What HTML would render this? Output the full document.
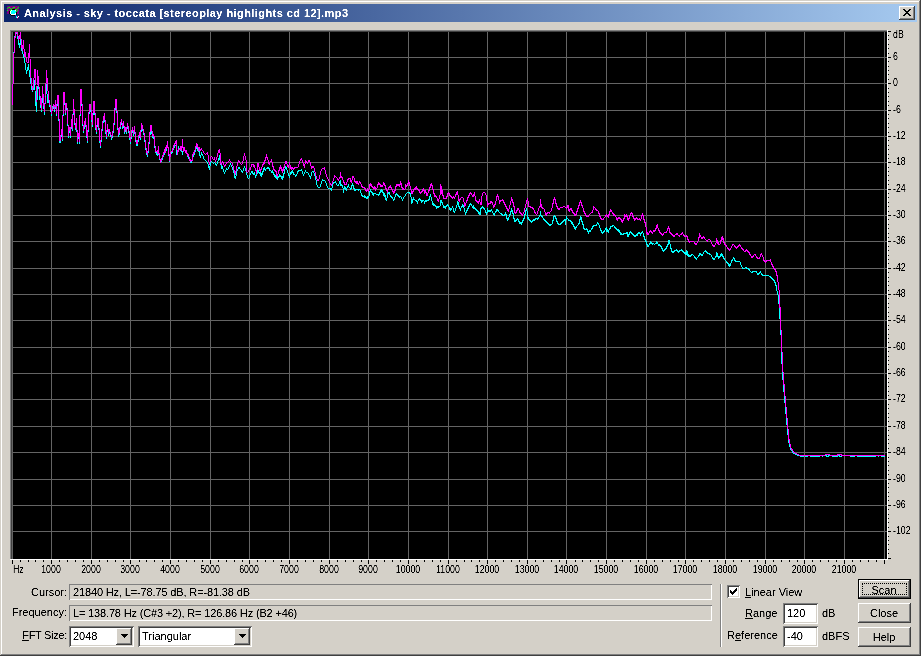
<!DOCTYPE html>
<html><head><meta charset="utf-8"><style>
html,body{margin:0;padding:0;}
body{width:921px;height:656px;overflow:hidden;background:#d4d0c8;position:relative;font-family:"Liberation Sans",sans-serif;}
div{position:absolute;}
.t{position:absolute;white-space:pre;line-height:13px;filter:url(#cx);font-family:"Liberation Sans",sans-serif;}
u{text-decoration:underline;}
</style></head><body>
<svg width="0" height="0" style="position:absolute"><filter id="cx"><feComponentTransfer><feFuncA type="linear" slope="2.2" intercept="-0.5"/></feComponentTransfer></filter></svg>
<div style="left:1px;top:1px;width:918px;height:1px;background:#fff;"></div>
<div style="left:1px;top:1px;width:1px;height:653px;background:#fff;"></div>
<div style="left:919px;top:1px;width:1px;height:654px;background:#808080;"></div>
<div style="left:1px;top:654px;width:919px;height:1px;background:#808080;"></div>
<div style="left:920px;top:0px;width:1px;height:656px;background:#404040;"></div>
<div style="left:0px;top:655px;width:921px;height:1px;background:#404040;"></div>
<div style="left:4px;top:4px;width:913px;height:18px;background:linear-gradient(to right,#0a246a,#a6caf0);"></div>
<span class="t" style="left:24px;top:7px;font-size:11px;font-weight:bold;color:#fff;letter-spacing:0.43px;">Analysis - sky - toccata [stereoplay highlights cd 12].mp3</span>
<svg style="position:absolute;left:4px;top:4px" width="18" height="18" shape-rendering="crispEdges"><rect x="3" y="2" width="12" height="8" fill="#800080"/><rect x="4" y="3" width="1" height="1" fill="#00ff00"/><rect x="5" y="3" width="1" height="1" fill="#00ff00"/><rect x="9" y="3" width="1" height="1" fill="#00ff00"/><rect x="10" y="3" width="1" height="1" fill="#00ff00"/><rect x="14" y="3" width="1" height="1" fill="#00ff00"/><rect x="3" y="4" width="1" height="1" fill="#00ff00"/><rect x="6" y="4" width="1" height="1" fill="#00ff00"/><rect x="8" y="4" width="1" height="1" fill="#00ff00"/><rect x="13" y="4" width="1" height="1" fill="#00ff00"/><rect x="7" y="5" width="1" height="1" fill="#00ff00"/><rect x="11" y="5" width="1" height="1" fill="#00ff00"/><rect x="12" y="5" width="1" height="1" fill="#00ff00"/><rect x="3" y="6" width="1" height="1" fill="#00ff00"/><rect x="6" y="6" width="1" height="1" fill="#00ff00"/><rect x="13" y="6" width="1" height="1" fill="#00ff00"/><rect x="12" y="7" width="1" height="1" fill="#00ff00"/><rect x="8" y="5" width="1" height="1" fill="#000000"/><rect x="9" y="5" width="1" height="1" fill="#000000"/><rect x="10" y="5" width="1" height="1" fill="#000000"/><rect x="5" y="7" width="1" height="1" fill="#000000"/><rect x="5" y="8" width="1" height="1" fill="#000000"/><rect x="5" y="9" width="1" height="1" fill="#000000"/><rect x="6" y="10" width="1" height="1" fill="#000000"/><rect x="7" y="11" width="1" height="1" fill="#000000"/><rect x="8" y="11" width="1" height="1" fill="#000000"/><rect x="9" y="11" width="1" height="1" fill="#000000"/><rect x="10" y="11" width="1" height="1" fill="#000000"/><rect x="12" y="8" width="1" height="1" fill="#000000"/><rect x="12" y="9" width="1" height="1" fill="#000000"/><rect x="12" y="10" width="1" height="1" fill="#000000"/><rect x="6" y="7" width="1" height="1" fill="#ffffff"/><rect x="6" y="8" width="1" height="1" fill="#ffffff"/><rect x="6" y="9" width="1" height="1" fill="#ffffff"/><rect x="7" y="10" width="1" height="1" fill="#ffffff"/><rect x="7" y="6" width="1" height="1" fill="#ffffff"/><rect x="11" y="6" width="1" height="1" fill="#ffffff"/><rect x="11" y="9" width="1" height="1" fill="#ffffff"/><rect x="11" y="10" width="1" height="1" fill="#ffffff"/><rect x="8" y="10" width="1" height="1" fill="#ffffff"/><rect x="9" y="10" width="1" height="1" fill="#ffffff"/><rect x="10" y="10" width="1" height="1" fill="#ffffff"/><rect x="13" y="13" width="1" height="1" fill="#ffffff"/><rect x="14" y="12" width="1" height="1" fill="#ffffff"/><rect x="8" y="6" width="1" height="1" fill="#00ffff"/><rect x="9" y="6" width="1" height="1" fill="#00ffff"/><rect x="10" y="6" width="1" height="1" fill="#00ffff"/><rect x="7" y="7" width="1" height="1" fill="#00ffff"/><rect x="8" y="7" width="1" height="1" fill="#00ffff"/><rect x="9" y="7" width="1" height="1" fill="#00ffff"/><rect x="10" y="7" width="1" height="1" fill="#00ffff"/><rect x="11" y="7" width="1" height="1" fill="#00ffff"/><rect x="7" y="8" width="1" height="1" fill="#00ffff"/><rect x="8" y="8" width="1" height="1" fill="#00ffff"/><rect x="9" y="8" width="1" height="1" fill="#00ffff"/><rect x="10" y="8" width="1" height="1" fill="#00ffff"/><rect x="11" y="8" width="1" height="1" fill="#00ffff"/><rect x="7" y="9" width="1" height="1" fill="#00ffff"/><rect x="8" y="9" width="1" height="1" fill="#00ffff"/><rect x="9" y="9" width="1" height="1" fill="#00ffff"/><rect x="10" y="9" width="1" height="1" fill="#00ffff"/><rect x="12" y="12" width="1" height="1" fill="#00ffff"/><rect x="12" y="13" width="1" height="1" fill="#00ffff"/><rect x="11" y="11" width="1" height="1" fill="#0000ff"/><rect x="13" y="12" width="1" height="1" fill="#800080"/><rect x="14" y="13" width="1" height="1" fill="#800080"/><rect x="13" y="14" width="1" height="1" fill="#800080"/></svg>
<div style="left:899px;top:6px;width:16px;height:14px;background:#d4d0c8;box-shadow:inset -1px -1px #404040,inset 1px 1px #fff,inset -2px -2px #808080;"></div>
<svg style="position:absolute;left:899px;top:6px" width="16" height="14" shape-rendering="crispEdges"><path d="M4 3h2v1h1v1h2v-1h1v-1h2v1h-1v1h-1v1h-1v1h1v1h1v1h1v1h-2v-1h-1v-1h-2v1h-1v1h-2v-1h1v-1h1v-1h1v-1h-1v-1h-1v-1h-1z" fill="#000"/></svg>
<div style="left:10px;top:30px;width:877px;height:1px;background:#808080;"></div>
<div style="left:10px;top:30px;width:1px;height:529px;background:#808080;"></div>
<div style="left:11px;top:31px;width:876px;height:1px;background:#404040;"></div>
<div style="left:11px;top:31px;width:1px;height:528px;background:#404040;"></div>
<div style="left:10px;top:559px;width:878px;height:1px;background:#fff;"></div>
<div style="left:887px;top:30px;width:1px;height:530px;background:#fff;"></div>
<svg style="position:absolute;left:12px;top:32px" width="875" height="527"><rect width="875" height="527" fill="#000"/><path d="M0.5 0V527M39.5 0V527M79.5 0V527M118.5 0V527M158.5 0V527M198.5 0V527M237.5 0V527M277.5 0V527M317.5 0V527M356.5 0V527M396.5 0V527M436.5 0V527M475.5 0V527M515.5 0V527M554.5 0V527M594.5 0V527M634.5 0V527M673.5 0V527M713.5 0V527M753.5 0V527M792.5 0V527M832.5 0V527M872.5 0V527M0 25.5H875M0 51.5H875M0 78.5H875M0 104.5H875M0 130.5H875M0 157.5H875M0 183.5H875M0 209.5H875M0 236.5H875M0 262.5H875M0 288.5H875M0 315.5H875M0 341.5H875M0 367.5H875M0 394.5H875M0 420.5H875M0 447.5H875M0 473.5H875M0 499.5H875" stroke="#646464" stroke-width="1" shape-rendering="crispEdges"/><polyline points="0.5,73.5 1.5,31.5 2.5,8.5 3.5,0.5 4.5,0.5 5.5,3.5 6.5,10.5 7.5,15.5 8.5,7.5 9.5,18.0 10.5,20.5 11.5,23.0 12.5,28.5 13.5,33.5 14.5,41.5 15.5,37.0 16.5,32.5 17.5,42.5 18.5,47.5 19.5,55.5 20.5,59.5 21.5,55.5 22.5,48.5 23.5,68.0 24.5,79.5 25.5,57.5 26.5,51.5 27.5,63.0 28.5,72.5 29.5,79.5 30.5,63.5 31.5,71.5 32.5,82.5 33.5,60.5 34.5,52.5 35.5,70.5 36.5,68.0 37.5,73.5 38.5,77.0 39.5,83.5 40.5,74.5 41.5,74.5 42.5,79.5 43.5,70.5 44.5,83.5 45.5,65.5 46.5,65.5 47.5,110.5 48.5,110.5 49.5,99.5 50.5,108.5 51.5,62.5 52.5,62.5 53.5,83.0 54.5,73.5 55.5,83.0 56.5,105.5 57.5,97.0 58.5,105.5 59.5,89.5 60.5,98.5 61.5,69.5 62.5,88.0 63.5,97.5 64.5,88.5 65.5,111.5 66.5,103.0 67.5,111.5 68.5,59.5 69.5,59.5 70.5,88.0 71.5,100.5 72.5,93.5 73.5,88.5 74.5,100.5 75.5,110.5 76.5,90.0 77.5,74.5 78.5,74.5 79.5,84.5 80.5,94.5 81.5,71.5 82.5,71.5 83.5,93.5 84.5,101.5 85.5,88.5 86.5,88.5 87.5,107.0 88.5,115.5 89.5,105.5 90.5,93.5 91.5,88.5 92.5,83.5 93.5,96.5 94.5,106.5 95.5,94.5 96.5,102.5 97.5,100.5 98.5,103.0 99.5,107.5 100.5,103.5 101.5,98.5 102.5,87.0 103.5,69.5 104.5,69.5 105.5,91.5 106.5,104.5 107.5,100.5 108.5,94.5 109.5,89.5 110.5,96.5 111.5,91.5 112.5,100.5 113.5,98.5 114.5,100.5 115.5,93.5 116.5,98.0 117.5,103.5 118.5,111.5 119.5,103.5 120.5,97.5 121.5,103.5 122.5,96.5 123.5,107.0 124.5,113.5 125.5,113.5 126.5,107.0 127.5,103.5 128.5,107.5 129.5,93.5 130.5,96.5 131.5,101.0 132.5,105.0 133.5,114.5 134.5,120.5 135.5,124.5 136.5,117.0 137.5,108.0 138.5,98.5 139.5,96.5" fill="none" stroke="#00ffff" stroke-width="1" shape-rendering="crispEdges"/><path d="M139 96h1v6h-1zM140 102h1v4h-1zM141 104h1v3h-1zM142 106h1v10h-1zM143 116h1v5h-1zM144 120h1v3h-1zM145 121h1v3h-1zM146 118h1v5h-1zM147 123h1v5h-1zM148 128h1v1h-1zM149 128h1v2h-1zM150 125h1v3h-1zM151 123h1v2h-1zM152 120h1v3h-1zM153 118h1v3h-1zM154 116h1v3h-1zM155 114h1v2h-1zM156 116h1v8h-1zM157 124h1v6h-1zM158 122h1v2h-1zM159 119h1v3h-1zM160 118h1v3h-1zM161 116h1v2h-1zM162 114h1v2h-1zM163 113h1v1h-1zM164 113h1v10h-1zM165 118h1v5h-1zM166 114h1v4h-1zM167 116h1v1h-1zM168 116h1v3h-1zM169 117h1v3h-1zM170 119h1v4h-1zM171 116h1v4h-1zM172 116h1v3h-1zM173 118h1v3h-1zM174 119h1v3h-1zM175 122h1v3h-1zM176 124h1v3h-1zM177 127h1v2h-1zM178 128h1v3h-1zM179 128h1v3h-1zM180 125h1v3h-1zM181 123h1v2h-1zM182 120h1v3h-1zM183 117h1v3h-1zM184 114h1v3h-1zM185 115h1v4h-1zM186 119h1v1h-1zM187 118h1v6h-1zM188 123h1v3h-1zM189 120h1v3h-1zM190 122h1v2h-1zM191 124h1v3h-1zM192 127h1v1h-1zM193 128h1v1h-1zM194 129h1v1h-1zM195 130h1v2h-1zM196 132h1v4h-1zM197 134h1v4h-1zM198 130h1v4h-1zM199 129h1v1h-1zM200 130h1v1h-1zM201 131h1v1h-1zM202 130h1v1h-1zM203 131h1v2h-1zM204 132h1v2h-1zM205 129h1v3h-1zM206 126h1v3h-1zM207 123h1v5h-1zM208 128h1v5h-1zM209 133h1v4h-1zM210 134h1v3h-1zM211 137h1v3h-1zM212 140h1v2h-1zM213 138h1v2h-1zM214 136h1v2h-1zM215 137h1v1h-1zM216 135h1v2h-1zM217 133h1v2h-1zM218 131h1v2h-1zM219 133h1v2h-1zM220 135h1v3h-1zM221 138h1v3h-1zM222 141h1v5h-1zM223 144h1v3h-1zM224 139h1v5h-1zM225 137h1v2h-1zM226 135h1v2h-1zM227 135h1v2h-1zM228 137h1v1h-1zM229 138h1v2h-1zM230 139h1v2h-1zM231 136h1v3h-1zM232 134h1v2h-1zM233 136h1v3h-1zM234 139h1v4h-1zM235 143h1v3h-1zM236 146h1v1h-1zM237 143h1v3h-1zM238 141h1v2h-1zM239 139h1v2h-1zM240 139h1v3h-1zM241 141h1v2h-1zM242 140h1v3h-1zM243 143h1v3h-1zM244 142h1v2h-1zM245 138h1v4h-1zM246 138h1v3h-1zM247 140h1v2h-1zM248 140h1v4h-1zM249 141h1v4h-1zM250 139h1v4h-1zM251 136h1v4h-1zM252 135h1v3h-1zM253 137h1v2h-1zM254 136h1v1h-1zM255 135h1v2h-1zM256 135h1v2h-1zM257 136h1v3h-1zM258 138h1v1h-1zM259 139h1v2h-1zM260 138h1v3h-1zM261 140h1v3h-1zM262 142h1v3h-1zM263 143h1v3h-1zM264 144h1v3h-1zM265 145h1v3h-1zM266 144h1v2h-1zM267 142h1v3h-1zM268 143h1v2h-1zM269 144h1v3h-1zM270 144h1v4h-1zM271 141h1v5h-1zM272 137h1v5h-1zM273 134h1v3h-1zM274 135h1v3h-1zM275 138h1v3h-1zM276 141h1v3h-1zM277 143h1v3h-1zM278 140h1v3h-1zM279 139h1v3h-1zM280 138h1v3h-1zM281 140h1v3h-1zM282 142h1v1h-1zM283 143h1v2h-1zM284 142h1v2h-1zM285 139h1v3h-1zM286 138h1v2h-1zM287 138h1v1h-1zM288 138h1v1h-1zM289 137h1v2h-1zM290 139h1v3h-1zM291 142h1v2h-1zM292 140h1v2h-1zM293 138h1v2h-1zM294 140h1v1h-1zM295 140h1v1h-1zM296 141h1v2h-1zM297 143h1v2h-1zM298 144h1v3h-1zM299 140h1v4h-1zM300 139h1v1h-1zM301 139h1v2h-1zM302 141h1v3h-1zM303 144h1v4h-1zM304 148h1v5h-1zM305 153h1v2h-1zM306 155h1v1h-1zM307 155h1v1h-1zM308 152h1v3h-1zM309 149h1v3h-1zM310 147h1v2h-1zM311 148h1v1h-1zM312 148h1v1h-1zM313 149h1v2h-1zM314 151h1v3h-1zM315 154h1v2h-1zM316 156h1v1h-1zM317 156h1v1h-1zM318 156h1v2h-1zM319 156h1v3h-1zM320 152h1v4h-1zM321 150h1v2h-1zM322 150h1v1h-1zM323 149h1v2h-1zM324 151h1v2h-1zM325 153h1v1h-1zM326 152h1v2h-1zM327 149h1v3h-1zM328 148h1v6h-1zM329 152h1v2h-1zM330 153h1v3h-1zM331 156h1v5h-1zM332 154h1v3h-1zM333 155h1v3h-1zM334 156h1v3h-1zM335 154h1v2h-1zM336 152h1v3h-1zM337 155h1v1h-1zM338 156h1v2h-1zM339 153h1v4h-1zM340 151h1v3h-1zM341 153h1v4h-1zM342 156h1v3h-1zM343 157h1v2h-1zM344 157h1v1h-1zM345 157h1v1h-1zM346 157h1v2h-1zM347 157h1v1h-1zM348 158h1v3h-1zM349 161h1v3h-1zM350 163h1v2h-1zM351 164h1v1h-1zM352 163h1v3h-1zM353 164h1v2h-1zM354 165h1v2h-1zM355 164h1v3h-1zM356 164h1v2h-1zM357 159h1v5h-1zM358 157h1v3h-1zM359 159h1v2h-1zM360 160h1v3h-1zM361 161h1v3h-1zM362 161h1v1h-1zM363 161h1v1h-1zM364 162h1v1h-1zM365 162h1v1h-1zM366 162h1v2h-1zM367 160h1v3h-1zM368 158h1v3h-1zM369 157h1v3h-1zM370 158h1v3h-1zM371 160h1v4h-1zM372 161h1v4h-1zM373 163h1v5h-1zM374 166h1v3h-1zM375 160h1v6h-1zM376 160h1v2h-1zM377 160h1v3h-1zM378 163h1v2h-1zM379 164h1v2h-1zM380 165h1v2h-1zM381 167h1v2h-1zM382 165h1v3h-1zM383 162h1v3h-1zM384 161h1v2h-1zM385 162h1v2h-1zM386 163h1v2h-1zM387 164h1v2h-1zM388 164h1v1h-1zM389 165h1v2h-1zM390 167h1v2h-1zM391 165h1v2h-1zM392 164h1v1h-1zM393 162h1v2h-1zM394 161h1v1h-1zM395 160h1v1h-1zM396 160h1v1h-1zM397 160h1v2h-1zM398 161h1v4h-1zM399 165h1v7h-1zM400 167h1v4h-1zM401 165h1v3h-1zM402 167h1v1h-1zM403 168h1v1h-1zM404 168h1v2h-1zM405 169h1v3h-1zM406 167h1v2h-1zM407 166h1v2h-1zM408 167h1v2h-1zM409 168h1v3h-1zM410 168h1v2h-1zM411 168h1v1h-1zM412 169h1v3h-1zM413 168h1v2h-1zM414 168h1v2h-1zM415 168h1v1h-1zM416 167h1v2h-1zM417 164h1v4h-1zM418 162h1v3h-1zM419 165h1v4h-1zM420 169h1v4h-1zM421 171h1v3h-1zM422 172h1v2h-1zM423 173h1v2h-1zM424 174h1v3h-1zM425 174h1v2h-1zM426 174h1v2h-1zM427 174h1v1h-1zM428 168h1v6h-1zM429 168h1v3h-1zM430 170h1v3h-1zM431 173h1v3h-1zM432 174h1v2h-1zM433 174h1v3h-1zM434 173h1v2h-1zM435 172h1v2h-1zM436 173h1v2h-1zM437 175h1v3h-1zM438 176h1v3h-1zM439 176h1v2h-1zM440 174h1v2h-1zM441 176h1v4h-1zM442 179h1v2h-1zM443 176h1v3h-1zM444 173h1v3h-1zM445 169h1v4h-1zM446 170h1v5h-1zM447 174h1v3h-1zM448 176h1v3h-1zM449 174h1v2h-1zM450 172h1v3h-1zM451 173h1v3h-1zM452 176h1v4h-1zM453 180h1v3h-1zM454 178h1v3h-1zM455 176h1v3h-1zM456 174h1v3h-1zM457 172h1v3h-1zM458 171h1v2h-1zM459 172h1v2h-1zM460 174h1v2h-1zM461 173h1v4h-1zM462 175h1v2h-1zM463 176h1v2h-1zM464 177h1v2h-1zM465 178h1v2h-1zM466 179h1v3h-1zM467 180h1v3h-1zM468 176h1v7h-1zM469 175h1v2h-1zM470 174h1v2h-1zM471 175h1v2h-1zM472 176h1v2h-1zM473 178h1v3h-1zM474 180h1v3h-1zM475 176h1v5h-1zM476 178h1v2h-1zM477 178h1v2h-1zM478 178h1v2h-1zM479 177h1v2h-1zM480 179h1v2h-1zM481 181h1v2h-1zM482 181h1v3h-1zM483 179h1v2h-1zM484 177h1v3h-1zM485 177h1v2h-1zM486 178h1v2h-1zM487 180h1v1h-1zM488 181h1v1h-1zM489 181h1v2h-1zM490 182h1v2h-1zM491 183h1v1h-1zM492 182h1v2h-1zM493 180h1v3h-1zM494 182h1v5h-1zM495 186h1v3h-1zM496 185h1v3h-1zM497 182h1v3h-1zM498 179h1v4h-1zM499 176h1v4h-1zM500 178h1v4h-1zM501 181h1v6h-1zM502 186h1v4h-1zM503 188h1v2h-1zM504 187h1v2h-1zM505 186h1v2h-1zM506 187h1v3h-1zM507 189h1v3h-1zM508 190h1v2h-1zM509 190h1v3h-1zM510 188h1v3h-1zM511 186h1v3h-1zM512 182h1v5h-1zM513 178h1v5h-1zM514 176h1v3h-1zM515 179h1v8h-1zM516 185h1v3h-1zM517 187h1v2h-1zM518 188h1v2h-1zM519 189h1v2h-1zM520 188h1v2h-1zM521 187h1v2h-1zM522 187h1v2h-1zM523 186h1v2h-1zM524 186h1v1h-1zM525 186h1v2h-1zM526 185h1v2h-1zM527 183h1v2h-1zM528 179h1v5h-1zM529 183h1v2h-1zM530 184h1v2h-1zM531 186h1v2h-1zM532 187h1v2h-1zM533 188h1v2h-1zM534 189h1v2h-1zM535 190h1v2h-1zM536 191h1v2h-1zM537 192h1v2h-1zM538 192h1v2h-1zM539 192h1v1h-1zM540 188h1v4h-1zM541 184h1v5h-1zM542 183h1v2h-1zM543 184h1v3h-1zM544 186h1v4h-1zM545 189h1v3h-1zM546 191h1v2h-1zM547 192h1v1h-1zM548 191h1v2h-1zM549 190h1v2h-1zM550 189h1v2h-1zM551 188h1v2h-1zM552 187h1v2h-1zM553 187h1v6h-1zM554 184h1v4h-1zM555 186h1v1h-1zM556 187h1v2h-1zM557 188h1v1h-1zM558 188h1v2h-1zM559 189h1v3h-1zM560 190h1v3h-1zM561 192h1v3h-1zM562 194h1v3h-1zM563 195h1v3h-1zM564 194h1v2h-1zM565 193h1v1h-1zM566 191h1v2h-1zM567 187h1v5h-1zM568 184h1v4h-1zM569 185h1v5h-1zM570 189h1v4h-1zM571 192h1v5h-1zM572 196h1v2h-1zM573 197h1v1h-1zM574 196h1v2h-1zM575 197h1v3h-1zM576 199h1v3h-1zM577 198h1v2h-1zM578 198h1v2h-1zM579 196h1v2h-1zM580 194h1v3h-1zM581 193h1v2h-1zM582 193h1v1h-1zM583 193h1v1h-1zM584 192h1v2h-1zM585 190h1v2h-1zM586 191h1v2h-1zM587 193h1v3h-1zM588 196h1v3h-1zM589 198h1v3h-1zM590 200h1v2h-1zM591 199h1v2h-1zM592 198h1v2h-1zM593 196h1v2h-1zM594 195h1v5h-1zM595 197h1v3h-1zM596 198h1v3h-1zM597 196h1v2h-1zM598 194h1v3h-1zM599 194h1v1h-1zM600 193h1v2h-1zM601 193h1v1h-1zM602 194h1v2h-1zM603 195h1v2h-1zM604 196h1v2h-1zM605 197h1v2h-1zM606 197h1v3h-1zM607 198h1v3h-1zM608 200h1v3h-1zM609 201h1v2h-1zM610 202h1v1h-1zM611 201h1v2h-1zM612 201h1v1h-1zM613 201h1v1h-1zM614 200h1v2h-1zM615 200h1v5h-1zM616 202h1v3h-1zM617 200h1v3h-1zM618 199h1v2h-1zM619 200h1v2h-1zM620 201h1v2h-1zM621 202h1v2h-1zM622 203h1v2h-1zM623 203h1v2h-1zM624 202h1v2h-1zM625 201h1v3h-1zM626 200h1v2h-1zM627 200h1v2h-1zM628 201h1v3h-1zM629 200h1v2h-1zM630 199h1v2h-1zM631 201h1v4h-1zM632 204h1v4h-1zM633 207h1v3h-1zM634 209h1v4h-1zM635 212h1v3h-1zM636 213h1v2h-1zM637 211h1v2h-1zM638 209h1v3h-1zM639 210h1v2h-1zM640 211h1v2h-1zM641 211h1v1h-1zM642 212h1v1h-1zM643 211h1v1h-1zM644 209h1v3h-1zM645 210h1v2h-1zM646 212h1v2h-1zM647 212h1v2h-1zM648 213h1v2h-1zM649 214h1v3h-1zM650 216h1v3h-1zM651 218h1v2h-1zM652 217h1v2h-1zM653 216h1v2h-1zM654 214h1v3h-1zM655 212h1v3h-1zM656 208h1v5h-1zM657 208h1v4h-1zM658 212h1v5h-1zM659 216h1v4h-1zM660 219h1v2h-1zM661 219h1v2h-1zM662 218h1v2h-1zM663 218h1v1h-1zM664 217h1v2h-1zM665 218h1v2h-1zM666 219h1v2h-1zM667 218h1v2h-1zM668 218h1v1h-1zM669 217h1v2h-1zM670 218h1v2h-1zM671 219h1v2h-1zM672 220h1v2h-1zM673 220h1v3h-1zM674 218h1v5h-1zM675 219h1v5h-1zM676 222h1v3h-1zM677 223h1v2h-1zM678 223h1v2h-1zM679 222h1v2h-1zM680 222h1v1h-1zM681 223h1v1h-1zM682 224h1v2h-1zM683 225h1v2h-1zM684 226h1v2h-1zM685 225h1v1h-1zM686 223h1v2h-1zM687 221h1v3h-1zM688 221h1v2h-1zM689 222h1v2h-1zM690 222h1v2h-1zM691 220h1v2h-1zM692 219h1v1h-1zM693 218h1v2h-1zM694 219h1v2h-1zM695 220h1v2h-1zM696 221h1v1h-1zM697 221h1v2h-1zM698 222h1v1h-1zM699 223h1v2h-1zM700 225h1v2h-1zM701 226h1v2h-1zM702 226h1v2h-1zM703 224h1v2h-1zM704 220h1v5h-1zM705 221h1v4h-1zM706 224h1v3h-1zM707 224h1v2h-1zM708 222h1v3h-1zM709 221h1v3h-1zM710 222h1v3h-1zM711 224h1v3h-1zM712 226h1v2h-1zM713 228h1v1h-1zM714 229h1v2h-1zM715 230h1v2h-1zM716 231h1v3h-1zM717 232h1v3h-1zM718 231h1v3h-1zM719 228h1v3h-1zM720 227h1v2h-1zM721 225h1v2h-1zM722 226h1v3h-1zM723 228h1v2h-1zM724 229h1v1h-1zM725 229h1v1h-1zM726 229h1v1h-1zM727 229h1v1h-1zM728 230h1v3h-1zM729 233h1v2h-1zM730 235h1v2h-1zM731 236h1v1h-1zM732 236h1v1h-1zM733 235h1v1h-1zM734 235h1v2h-1zM735 236h1v1h-1zM736 236h1v2h-1zM737 237h1v2h-1zM738 239h1v1h-1zM739 240h1v1h-1zM740 239h1v2h-1zM741 239h1v1h-1zM742 239h1v1h-1zM743 239h1v1h-1zM744 239h1v2h-1zM745 241h1v2h-1zM746 241h1v2h-1zM747 240h1v2h-1zM748 239h1v2h-1zM749 241h1v2h-1zM750 242h1v2h-1zM751 243h1v1h-1zM752 243h1v1h-1zM753 243h1v1h-1zM754 243h1v1h-1zM755 243h1v1h-1zM756 243h1v1h-1zM757 244h1v1h-1zM758 244h1v2h-1zM759 245h1v2h-1zM760 246h1v2h-1zM761 247h1v2h-1zM762 248h1v3h-1zM763 250h1v4h-1zM764 253h1v5h-1z" fill="#00ffff" shape-rendering="crispEdges"/><polyline points="764.5,257.5 765.8,261.5 766.8,268.5 767.7,284.5 768.8,292.5 769.3,317.5 770.5,342.0 772.7,367.5 775.0,392.5 776.5,408.5 778.5,416.5 781.0,421.0 786.0,423.7 790.5,424.5 792.5,423.5 794.5,424.5 796.5,423.5 798.5,424.0 800.5,424.0 802.5,424.0 804.5,424.0 806.5,424.5 808.5,423.5 810.5,424.0 812.5,423.5 814.5,424.0 816.5,424.0 818.5,423.5 820.5,424.0 822.5,424.5 824.5,424.5 826.5,423.5 828.5,424.5 830.5,423.5 832.5,423.5 834.5,423.5 836.5,423.5 838.5,424.0 840.5,424.5 842.5,424.0 844.5,423.5 846.5,424.5 848.5,424.0 850.5,424.0 852.5,424.5 854.5,424.5 856.5,424.5 858.5,424.5 860.5,424.0 862.5,424.5 864.5,423.5 866.5,424.0 868.5,423.5 870.5,424.5 872.5,424.5" fill="none" stroke="#00ffff" stroke-width="1" shape-rendering="crispEdges"/><polyline points="0.5,73.5 1.5,31.5 2.5,11.0 3.5,0.5 4.5,0.5 5.5,0.5 6.5,7.5 7.5,6.0 8.5,0.5 9.5,13.0 10.5,18.5 11.5,8.5 12.5,25.0 13.5,20.5 14.5,29.0 15.5,30.5 16.5,30.5 17.5,12.5 18.5,40.0 19.5,51.0 20.5,57.5 21.5,55.0 22.5,37.5 23.5,37.5 24.5,69.5 25.5,38.5 26.5,49.5 27.5,59.5 28.5,68.0 29.5,77.5 30.5,54.5 31.5,69.0 32.5,79.5 33.5,64.5 34.5,38.5 35.5,53.5 36.5,64.5 37.5,71.5 38.5,74.0 39.5,81.5 40.5,77.0 41.5,72.5 42.5,77.5 43.5,68.5 44.5,81.5 45.5,63.5 46.5,63.5 47.5,108.5 48.5,108.5 49.5,97.5 50.5,106.5 51.5,60.5 52.5,60.5 53.5,81.0 54.5,71.5 55.5,81.0 56.5,103.5 57.5,95.0 58.5,103.5 59.5,87.5 60.5,96.5 61.5,67.5 62.5,86.0 63.5,95.5 64.5,86.5 65.5,109.5 66.5,101.0 67.5,109.5 68.5,57.5 69.5,57.5 70.5,86.0 71.5,98.5 72.5,91.5 73.5,86.5 74.5,98.5 75.5,108.5 76.5,88.0 77.5,72.5 78.5,72.5 79.5,82.5 80.5,92.5 81.5,69.5 82.5,69.5 83.5,91.5 84.5,99.5 85.5,86.5 86.5,86.5 87.5,105.0 88.5,113.5 89.5,103.5 90.5,91.5 91.5,86.5 92.5,81.5 93.5,94.5 94.5,104.5 95.5,92.5 96.5,100.5 97.5,98.5 98.5,101.0 99.5,105.5 100.5,101.5 101.5,96.5 102.5,85.0 103.5,67.5 104.5,67.5 105.5,89.5 106.5,102.5 107.5,98.5 108.5,92.5 109.5,87.5 110.5,94.5 111.5,89.5 112.5,98.5 113.5,96.5 114.5,98.5 115.5,91.5 116.5,96.0 117.5,101.5 118.5,109.5 119.5,101.5 120.5,95.5 121.5,101.5 122.5,94.5 123.5,105.0 124.5,111.5 125.5,111.5 126.5,105.0 127.5,101.5 128.5,105.5 129.5,91.5 130.5,94.5 131.5,99.0 132.5,103.0 133.5,112.5 134.5,118.5 135.5,122.5 136.5,115.0 137.5,106.0 138.5,93.5 139.5,96.0" fill="none" stroke="#ff00ff" stroke-width="1" shape-rendering="crispEdges"/><path d="M139 93h1v6h-1zM140 99h1v5h-1zM141 102h1v3h-1zM142 104h1v10h-1zM143 114h1v6h-1zM144 119h1v1h-1zM145 118h1v4h-1zM146 114h1v8h-1zM147 121h1v6h-1zM148 127h1v4h-1zM149 126h1v3h-1zM150 123h1v3h-1zM151 120h1v4h-1zM152 117h1v4h-1zM153 115h1v6h-1zM154 113h1v4h-1zM155 109h1v7h-1zM156 115h1v8h-1zM157 122h1v7h-1zM158 120h1v5h-1zM159 119h1v1h-1zM160 116h1v4h-1zM161 113h1v4h-1zM162 111h1v3h-1zM163 109h1v3h-1zM164 108h1v10h-1zM165 118h1v5h-1zM166 117h1v3h-1zM167 116h1v2h-1zM168 114h1v4h-1zM169 114h1v5h-1zM170 107h1v9h-1zM171 115h1v5h-1zM172 115h1v4h-1zM173 118h1v3h-1zM174 118h1v4h-1zM175 121h1v3h-1zM176 122h1v3h-1zM177 125h1v4h-1zM178 127h1v3h-1zM179 128h1v1h-1zM180 122h1v7h-1zM181 120h1v3h-1zM182 118h1v3h-1zM183 114h1v4h-1zM184 111h1v4h-1zM185 112h1v4h-1zM186 115h1v4h-1zM187 115h1v4h-1zM188 117h1v2h-1zM189 116h1v2h-1zM190 118h1v1h-1zM191 119h1v2h-1zM192 121h1v1h-1zM193 122h1v1h-1zM194 121h1v1h-1zM195 120h1v3h-1zM196 123h1v7h-1zM197 130h1v3h-1zM198 125h1v5h-1zM199 124h1v1h-1zM200 125h1v2h-1zM201 127h1v1h-1zM202 125h1v3h-1zM203 128h1v2h-1zM204 125h1v3h-1zM205 121h1v4h-1zM206 118h1v3h-1zM207 117h1v4h-1zM208 121h1v11h-1zM209 131h1v2h-1zM210 129h1v2h-1zM211 130h1v3h-1zM212 133h1v2h-1zM213 132h1v2h-1zM214 130h1v2h-1zM215 130h1v1h-1zM216 129h1v1h-1zM217 127h1v2h-1zM218 129h1v1h-1zM219 130h1v1h-1zM220 131h1v3h-1zM221 134h1v4h-1zM222 138h1v3h-1zM223 139h1v4h-1zM224 134h1v5h-1zM225 130h1v4h-1zM226 128h1v2h-1zM227 129h1v2h-1zM228 131h1v1h-1zM229 132h1v1h-1zM230 129h1v3h-1zM231 124h1v5h-1zM232 121h1v3h-1zM233 124h1v4h-1zM234 128h1v12h-1zM235 140h1v1h-1zM236 138h1v2h-1zM237 136h1v2h-1zM238 135h1v3h-1zM239 132h1v3h-1zM240 132h1v1h-1zM241 132h1v3h-1zM242 133h1v3h-1zM243 136h1v3h-1zM244 138h1v4h-1zM245 131h1v7h-1zM246 131h1v4h-1zM247 135h1v4h-1zM248 137h1v3h-1zM249 135h1v3h-1zM250 132h1v3h-1zM251 130h1v3h-1zM252 128h1v4h-1zM253 125h1v4h-1zM254 122h1v4h-1zM255 125h1v3h-1zM256 128h1v4h-1zM257 130h1v3h-1zM258 129h1v1h-1zM259 127h1v3h-1zM260 130h1v5h-1zM261 134h1v4h-1zM262 137h1v2h-1zM263 138h1v2h-1zM264 139h1v5h-1zM265 142h1v3h-1zM266 138h1v4h-1zM267 135h1v4h-1zM268 133h1v4h-1zM269 135h1v4h-1zM270 137h1v4h-1zM271 135h1v4h-1zM272 132h1v4h-1zM273 129h1v3h-1zM274 129h1v3h-1zM275 132h1v3h-1zM276 133h1v3h-1zM277 130h1v3h-1zM278 133h1v4h-1zM279 135h1v3h-1zM280 135h1v2h-1zM281 136h1v2h-1zM282 135h1v2h-1zM283 135h1v1h-1zM284 135h1v1h-1zM285 135h1v1h-1zM286 132h1v3h-1zM287 129h1v3h-1zM288 127h1v2h-1zM289 126h1v2h-1zM290 128h1v3h-1zM291 131h1v3h-1zM292 132h1v4h-1zM293 128h1v4h-1zM294 129h1v2h-1zM295 130h1v2h-1zM296 128h1v2h-1zM297 128h1v2h-1zM298 130h1v4h-1zM299 134h1v3h-1zM300 134h1v2h-1zM301 134h1v2h-1zM302 136h1v4h-1zM303 140h1v4h-1zM304 144h1v3h-1zM305 147h1v2h-1zM306 147h1v2h-1zM307 143h1v4h-1zM308 139h1v4h-1zM309 137h1v2h-1zM310 136h1v1h-1zM311 136h1v1h-1zM312 135h1v3h-1zM313 138h1v4h-1zM314 142h1v3h-1zM315 145h1v2h-1zM316 147h1v2h-1zM317 149h1v2h-1zM318 151h1v2h-1zM319 152h1v2h-1zM320 149h1v3h-1zM321 146h1v3h-1zM322 143h1v3h-1zM323 144h1v1h-1zM324 145h1v1h-1zM325 146h1v2h-1zM326 147h1v2h-1zM327 145h1v2h-1zM328 140h1v6h-1zM329 144h1v2h-1zM330 145h1v3h-1zM331 148h1v3h-1zM332 150h1v3h-1zM333 152h1v1h-1zM334 150h1v3h-1zM335 147h1v3h-1zM336 146h1v2h-1zM337 146h1v1h-1zM338 146h1v4h-1zM339 148h1v3h-1zM340 144h1v4h-1zM341 144h1v2h-1zM342 146h1v4h-1zM343 149h1v2h-1zM344 149h1v3h-1zM345 149h1v3h-1zM346 151h1v2h-1zM347 149h1v2h-1zM348 150h1v2h-1zM349 152h1v3h-1zM350 154h1v2h-1zM351 155h1v1h-1zM352 155h1v2h-1zM353 156h1v3h-1zM354 158h1v2h-1zM355 156h1v3h-1zM356 157h1v3h-1zM357 152h1v5h-1zM358 151h1v3h-1zM359 152h1v3h-1zM360 154h1v2h-1zM361 155h1v2h-1zM362 154h1v3h-1zM363 155h1v4h-1zM364 156h1v1h-1zM365 152h1v4h-1zM366 150h1v3h-1zM367 151h1v2h-1zM368 152h1v3h-1zM369 153h1v2h-1zM370 153h1v2h-1zM371 150h1v3h-1zM372 151h1v3h-1zM373 153h1v4h-1zM374 156h1v3h-1zM375 158h1v3h-1zM376 155h1v3h-1zM377 154h1v2h-1zM378 153h1v3h-1zM379 155h1v3h-1zM380 157h1v3h-1zM381 159h1v3h-1zM382 158h1v3h-1zM383 154h1v5h-1zM384 152h1v3h-1zM385 152h1v2h-1zM386 152h1v2h-1zM387 152h1v3h-1zM388 149h1v4h-1zM389 151h1v5h-1zM390 155h1v3h-1zM391 156h1v2h-1zM392 157h1v1h-1zM393 152h1v5h-1zM394 153h1v2h-1zM395 151h1v3h-1zM396 148h1v4h-1zM397 150h1v4h-1zM398 154h1v4h-1zM399 158h1v4h-1zM400 159h1v3h-1zM401 157h1v3h-1zM402 156h1v2h-1zM403 155h1v3h-1zM404 154h1v3h-1zM405 156h1v2h-1zM406 157h1v2h-1zM407 158h1v3h-1zM408 160h1v2h-1zM409 159h1v2h-1zM410 157h1v3h-1zM411 156h1v3h-1zM412 158h1v4h-1zM413 158h1v3h-1zM414 160h1v4h-1zM415 161h1v3h-1zM416 158h1v3h-1zM417 155h1v4h-1zM418 152h1v4h-1zM419 151h1v3h-1zM420 153h1v5h-1zM421 157h1v5h-1zM422 161h1v4h-1zM423 163h1v2h-1zM424 164h1v2h-1zM425 166h1v3h-1zM426 167h1v3h-1zM427 163h1v4h-1zM428 152h1v11h-1zM429 154h1v8h-1zM430 158h1v6h-1zM431 163h1v4h-1zM432 166h1v1h-1zM433 166h1v1h-1zM434 164h1v3h-1zM435 161h1v4h-1zM436 160h1v2h-1zM437 161h1v3h-1zM438 163h1v2h-1zM439 164h1v2h-1zM440 165h1v2h-1zM441 164h1v2h-1zM442 165h1v2h-1zM443 162h1v3h-1zM444 160h1v3h-1zM445 159h1v4h-1zM446 163h1v6h-1zM447 167h1v3h-1zM448 166h1v2h-1zM449 165h1v1h-1zM450 165h1v1h-1zM451 166h1v4h-1zM452 170h1v5h-1zM453 171h1v3h-1zM454 168h1v3h-1zM455 165h1v4h-1zM456 163h1v3h-1zM457 161h1v3h-1zM458 160h1v2h-1zM459 161h1v2h-1zM460 163h1v2h-1zM461 162h1v3h-1zM462 160h1v4h-1zM463 164h1v5h-1zM464 168h1v2h-1zM465 169h1v2h-1zM466 169h1v3h-1zM467 167h1v3h-1zM468 170h1v3h-1zM469 164h1v9h-1zM470 161h1v3h-1zM471 160h1v1h-1zM472 160h1v1h-1zM473 161h1v2h-1zM474 163h1v6h-1zM475 169h1v6h-1zM476 171h1v2h-1zM477 171h1v1h-1zM478 169h1v3h-1zM479 169h1v2h-1zM480 170h1v3h-1zM481 173h1v3h-1zM482 172h1v3h-1zM483 169h1v4h-1zM484 164h1v5h-1zM485 162h1v3h-1zM486 164h1v4h-1zM487 168h1v4h-1zM488 168h1v2h-1zM489 168h1v1h-1zM490 167h1v2h-1zM491 168h1v3h-1zM492 170h1v3h-1zM493 172h1v3h-1zM494 174h1v3h-1zM495 176h1v3h-1zM496 177h1v3h-1zM497 173h1v4h-1zM498 169h1v4h-1zM499 165h1v4h-1zM500 167h1v4h-1zM501 170h1v5h-1zM502 174h1v7h-1zM503 180h1v2h-1zM504 178h1v3h-1zM505 176h1v3h-1zM506 176h1v2h-1zM507 178h1v3h-1zM508 180h1v2h-1zM509 181h1v2h-1zM510 182h1v2h-1zM511 180h1v2h-1zM512 176h1v4h-1zM513 172h1v4h-1zM514 168h1v4h-1zM515 166h1v3h-1zM516 169h1v6h-1zM517 174h1v1h-1zM518 174h1v2h-1zM519 175h1v1h-1zM520 175h1v2h-1zM521 176h1v2h-1zM522 178h1v3h-1zM523 180h1v2h-1zM524 182h1v1h-1zM525 179h1v3h-1zM526 176h1v3h-1zM527 174h1v2h-1zM528 167h1v8h-1zM529 172h1v4h-1zM530 175h1v2h-1zM531 176h1v1h-1zM532 177h1v3h-1zM533 180h1v3h-1zM534 181h1v3h-1zM535 180h1v2h-1zM536 180h1v1h-1zM537 180h1v2h-1zM538 179h1v1h-1zM539 176h1v3h-1zM540 171h1v5h-1zM541 167h1v5h-1zM542 165h1v3h-1zM543 167h1v5h-1zM544 171h1v4h-1zM545 174h1v3h-1zM546 176h1v2h-1zM547 176h1v2h-1zM548 175h1v1h-1zM549 175h1v1h-1zM550 175h1v1h-1zM551 174h1v1h-1zM552 174h1v1h-1zM553 175h1v1h-1zM554 175h1v2h-1zM555 173h1v3h-1zM556 173h1v6h-1zM557 177h1v3h-1zM558 176h1v2h-1zM559 176h1v3h-1zM560 178h1v3h-1zM561 180h1v2h-1zM562 181h1v3h-1zM563 182h1v2h-1zM564 179h1v4h-1zM565 176h1v4h-1zM566 173h1v4h-1zM567 170h1v4h-1zM568 168h1v3h-1zM569 170h1v4h-1zM570 173h1v3h-1zM571 176h1v4h-1zM572 179h1v3h-1zM573 181h1v3h-1zM574 183h1v2h-1zM575 184h1v1h-1zM576 183h1v2h-1zM577 182h1v1h-1zM578 181h1v1h-1zM579 180h1v1h-1zM580 178h1v3h-1zM581 174h1v4h-1zM582 175h1v1h-1zM583 176h1v2h-1zM584 177h1v2h-1zM585 178h1v1h-1zM586 179h1v3h-1zM587 181h1v4h-1zM588 184h1v3h-1zM589 186h1v2h-1zM590 187h1v1h-1zM591 186h1v2h-1zM592 185h1v1h-1zM593 183h1v2h-1zM594 182h1v2h-1zM595 183h1v2h-1zM596 182h1v4h-1zM597 179h1v4h-1zM598 177h1v3h-1zM599 178h1v2h-1zM600 180h1v2h-1zM601 181h1v3h-1zM602 182h1v2h-1zM603 183h1v2h-1zM604 185h1v3h-1zM605 186h1v3h-1zM606 185h1v2h-1zM607 185h1v2h-1zM608 186h1v2h-1zM609 187h1v3h-1zM610 188h1v3h-1zM611 186h1v3h-1zM612 182h1v5h-1zM613 183h1v2h-1zM614 182h1v3h-1zM615 184h1v4h-1zM616 186h1v3h-1zM617 183h1v4h-1zM618 181h1v3h-1zM619 180h1v2h-1zM620 181h1v4h-1zM621 184h1v3h-1zM622 186h1v3h-1zM623 186h1v2h-1zM624 185h1v2h-1zM625 186h1v2h-1zM626 187h1v1h-1zM627 186h1v2h-1zM628 187h1v2h-1zM629 183h1v4h-1zM630 181h1v3h-1zM631 183h1v5h-1zM632 187h1v4h-1zM633 190h1v5h-1zM634 195h1v7h-1zM635 200h1v3h-1zM636 201h1v2h-1zM637 199h1v2h-1zM638 198h1v2h-1zM639 199h1v2h-1zM640 200h1v2h-1zM641 198h1v2h-1zM642 198h1v2h-1zM643 196h1v3h-1zM644 193h1v4h-1zM645 192h1v4h-1zM646 196h1v3h-1zM647 198h1v3h-1zM648 200h1v2h-1zM649 201h1v2h-1zM650 202h1v2h-1zM651 201h1v2h-1zM652 200h1v1h-1zM653 200h1v1h-1zM654 199h1v2h-1zM655 196h1v3h-1zM656 194h1v3h-1zM657 196h1v5h-1zM658 200h1v2h-1zM659 201h1v2h-1zM660 202h1v2h-1zM661 203h1v2h-1zM662 203h1v2h-1zM663 202h1v1h-1zM664 201h1v2h-1zM665 201h1v2h-1zM666 203h1v1h-1zM667 203h1v2h-1zM668 202h1v1h-1zM669 201h1v2h-1zM670 200h1v2h-1zM671 202h1v2h-1zM672 203h1v2h-1zM673 204h1v1h-1zM674 203h1v2h-1zM675 204h1v4h-1zM676 207h1v3h-1zM677 209h1v2h-1zM678 209h1v1h-1zM679 209h1v1h-1zM680 209h1v1h-1zM681 209h1v1h-1zM682 210h1v2h-1zM683 211h1v2h-1zM684 211h1v2h-1zM685 209h1v2h-1zM686 205h1v4h-1zM687 201h1v5h-1zM688 203h1v2h-1zM689 205h1v2h-1zM690 205h1v2h-1zM691 204h1v2h-1zM692 205h1v2h-1zM693 207h1v1h-1zM694 208h1v1h-1zM695 208h1v2h-1zM696 207h1v1h-1zM697 207h1v1h-1zM698 208h1v2h-1zM699 210h1v2h-1zM700 212h1v2h-1zM701 213h1v2h-1zM702 213h1v2h-1zM703 211h1v2h-1zM704 206h1v5h-1zM705 208h1v4h-1zM706 210h1v3h-1zM707 212h1v1h-1zM708 208h1v4h-1zM709 205h1v4h-1zM710 204h1v4h-1zM711 206h1v5h-1zM712 210h1v3h-1zM713 212h1v2h-1zM714 213h1v2h-1zM715 215h1v2h-1zM716 216h1v2h-1zM717 217h1v2h-1zM718 216h1v2h-1zM719 214h1v2h-1zM720 212h1v2h-1zM721 212h1v1h-1zM722 213h1v2h-1zM723 214h1v2h-1zM724 215h1v2h-1zM725 214h1v2h-1zM726 213h1v2h-1zM727 212h1v2h-1zM728 213h1v2h-1zM729 215h1v2h-1zM730 216h1v2h-1zM731 217h1v2h-1zM732 219h1v1h-1zM733 218h1v2h-1zM734 217h1v2h-1zM735 218h1v2h-1zM736 219h1v2h-1zM737 220h1v3h-1zM738 222h1v2h-1zM739 224h1v2h-1zM740 224h1v2h-1zM741 223h1v2h-1zM742 222h1v1h-1zM743 222h1v2h-1zM744 224h1v2h-1zM745 225h1v2h-1zM746 226h1v1h-1zM747 225h1v2h-1zM748 222h1v3h-1zM749 221h1v2h-1zM750 223h1v2h-1zM751 225h1v4h-1zM752 228h1v2h-1zM753 229h1v2h-1zM754 228h1v2h-1zM755 228h1v1h-1zM756 228h1v1h-1zM757 228h1v1h-1zM758 227h1v3h-1zM759 230h1v3h-1zM760 232h1v3h-1zM761 234h1v3h-1zM762 236h1v2h-1zM763 237h1v3h-1zM764 239h1v5h-1zM765 243h1v5h-1z" fill="#ff00ff" shape-rendering="crispEdges"/><polyline points="765.5,247.5 766.7,253.5 767.7,268.5 768.7,290.5 769.9,317.5 771.1,342.0 773.3,367.5 775.6,392.5 777.1,408.5 779.0,416.0 781.5,420.0 786.5,423.0 790.5,423.5 792.5,423.5 794.5,423.5 796.5,423.5 798.5,423.5 800.5,423.5 802.5,423.5 804.5,423.5 806.5,423.5 808.5,423.5 810.5,423.5 812.5,423.5 814.5,422.0 816.5,422.0 818.5,423.5 820.5,423.5 822.5,423.5 824.5,423.5 826.5,422.5 828.5,422.5 830.5,423.5 832.5,423.5 834.5,423.5 836.5,423.5 838.5,423.5 840.5,423.5 842.5,423.5 844.5,423.5 846.5,423.5 848.5,423.5 850.5,423.5 852.5,423.5 854.5,423.5 856.5,423.5 858.5,423.5 860.5,423.5 862.5,423.5 864.5,423.5 866.5,423.5 868.5,423.5 870.5,423.5 872.5,423.5" fill="none" stroke="#ff00ff" stroke-width="1" shape-rendering="crispEdges"/></svg>
<svg style="position:absolute;left:0;top:0" width="921" height="656" shape-rendering="crispEdges"><path d="M12.5 560v4M20.5 560v2M28.5 560v2M35.5 560v2M43.5 560v2M51.5 560v4M59.5 560v2M67.5 560v2M75.5 560v2M83.5 560v2M91.5 560v4M99.5 560v2M107.5 560v2M115.5 560v2M123.5 560v2M130.5 560v4M139.5 560v2M146.5 560v2M154.5 560v2M162.5 560v2M170.5 560v4M178.5 560v2M186.5 560v2M194.5 560v2M202.5 560v2M210.5 560v4M218.5 560v2M226.5 560v2M234.5 560v2M242.5 560v2M249.5 560v4M257.5 560v2M265.5 560v2M273.5 560v2M281.5 560v2M289.5 560v4M297.5 560v2M305.5 560v2M313.5 560v2M321.5 560v2M329.5 560v4M337.5 560v2M345.5 560v2M353.5 560v2M361.5 560v2M368.5 560v4M376.5 560v2M384.5 560v2M392.5 560v2M400.5 560v2M408.5 560v4M416.5 560v2M424.5 560v2M432.5 560v2M440.5 560v2M448.5 560v4M456.5 560v2M464.5 560v2M471.5 560v2M479.5 560v2M487.5 560v4M495.5 560v2M503.5 560v2M511.5 560v2M519.5 560v2M527.5 560v4M535.5 560v2M543.5 560v2M551.5 560v2M559.5 560v2M566.5 560v4M575.5 560v2M582.5 560v2M590.5 560v2M598.5 560v2M606.5 560v4M614.5 560v2M622.5 560v2M630.5 560v2M638.5 560v2M646.5 560v4M654.5 560v2M662.5 560v2M670.5 560v2M678.5 560v2M685.5 560v4M693.5 560v2M701.5 560v2M709.5 560v2M717.5 560v2M725.5 560v4M733.5 560v2M741.5 560v2M749.5 560v2M757.5 560v2M765.5 560v4M773.5 560v2M781.5 560v2M789.5 560v2M797.5 560v2M804.5 560v4M812.5 560v2M820.5 560v2M828.5 560v2M836.5 560v2M844.5 560v4M852.5 560v2M860.5 560v2M868.5 560v2M876.5 560v2M884.5 560v4M888 31.5h3M888 35.5h1M888 39.5h1M888 44.5h1M888 48.5h1M888 53.5h1M888 57.5h3M888 61.5h1M888 66.5h1M888 70.5h1M888 74.5h1M888 79.5h1M888 83.5h3M888 88.5h1M888 92.5h1M888 96.5h1M888 101.5h1M888 105.5h1M888 110.5h3M888 114.5h1M888 118.5h1M888 123.5h1M888 127.5h1M888 132.5h1M888 136.5h3M888 140.5h1M888 145.5h1M888 149.5h1M888 154.5h1M888 158.5h1M888 162.5h3M888 167.5h1M888 171.5h1M888 175.5h1M888 180.5h1M888 184.5h1M888 189.5h3M888 193.5h1M888 197.5h1M888 202.5h1M888 206.5h1M888 211.5h1M888 215.5h3M888 219.5h1M888 224.5h1M888 228.5h1M888 233.5h1M888 237.5h1M888 241.5h3M888 246.5h1M888 250.5h1M888 255.5h1M888 259.5h1M888 263.5h1M888 268.5h3M888 272.5h1M888 277.5h1M888 281.5h1M888 285.5h1M888 290.5h1M888 294.5h3M888 298.5h1M888 303.5h1M888 307.5h1M888 312.5h1M888 316.5h1M888 320.5h3M888 325.5h1M888 329.5h1M888 334.5h1M888 338.5h1M888 342.5h1M888 347.5h3M888 351.5h1M888 356.5h1M888 360.5h1M888 364.5h1M888 369.5h1M888 373.5h3M888 378.5h1M888 382.5h1M888 386.5h1M888 391.5h1M888 395.5h1M888 399.5h3M888 404.5h1M888 408.5h1M888 413.5h1M888 417.5h1M888 421.5h1M888 426.5h3M888 430.5h1M888 435.5h1M888 439.5h1M888 443.5h1M888 448.5h1M888 452.5h3M888 457.5h1M888 461.5h1M888 465.5h1M888 470.5h1M888 474.5h1M888 479.5h3M888 483.5h1M888 487.5h1M888 492.5h1M888 496.5h1M888 500.5h1M888 505.5h3M888 509.5h1M888 514.5h1M888 518.5h1M888 522.5h1M888 527.5h1M888 531.5h3M888 536.5h1M888 540.5h1M888 544.5h1M888 549.5h1M888 553.5h1M888 558.5h3" stroke="#000" stroke-width="1"/></svg>
<span class="t" style="left:13px;top:563px;font-size:10px;color:#000;transform:scaleX(0.88);transform-origin:0 0;">Hz</span>
<span class="t" style="left:51px;top:563px;width:0;font-size:10px;color:#000;display:flex;justify-content:center;transform:scaleX(0.88);transform-origin:0 0;"><span>1000</span></span>
<span class="t" style="left:91px;top:563px;width:0;font-size:10px;color:#000;display:flex;justify-content:center;transform:scaleX(0.88);transform-origin:0 0;"><span>2000</span></span>
<span class="t" style="left:130px;top:563px;width:0;font-size:10px;color:#000;display:flex;justify-content:center;transform:scaleX(0.88);transform-origin:0 0;"><span>3000</span></span>
<span class="t" style="left:170px;top:563px;width:0;font-size:10px;color:#000;display:flex;justify-content:center;transform:scaleX(0.88);transform-origin:0 0;"><span>4000</span></span>
<span class="t" style="left:210px;top:563px;width:0;font-size:10px;color:#000;display:flex;justify-content:center;transform:scaleX(0.88);transform-origin:0 0;"><span>5000</span></span>
<span class="t" style="left:249px;top:563px;width:0;font-size:10px;color:#000;display:flex;justify-content:center;transform:scaleX(0.88);transform-origin:0 0;"><span>6000</span></span>
<span class="t" style="left:289px;top:563px;width:0;font-size:10px;color:#000;display:flex;justify-content:center;transform:scaleX(0.88);transform-origin:0 0;"><span>7000</span></span>
<span class="t" style="left:329px;top:563px;width:0;font-size:10px;color:#000;display:flex;justify-content:center;transform:scaleX(0.88);transform-origin:0 0;"><span>8000</span></span>
<span class="t" style="left:368px;top:563px;width:0;font-size:10px;color:#000;display:flex;justify-content:center;transform:scaleX(0.88);transform-origin:0 0;"><span>9000</span></span>
<span class="t" style="left:408px;top:563px;width:0;font-size:10px;color:#000;display:flex;justify-content:center;transform:scaleX(0.88);transform-origin:0 0;"><span>10000</span></span>
<span class="t" style="left:448px;top:563px;width:0;font-size:10px;color:#000;display:flex;justify-content:center;transform:scaleX(0.88);transform-origin:0 0;"><span>11000</span></span>
<span class="t" style="left:487px;top:563px;width:0;font-size:10px;color:#000;display:flex;justify-content:center;transform:scaleX(0.88);transform-origin:0 0;"><span>12000</span></span>
<span class="t" style="left:527px;top:563px;width:0;font-size:10px;color:#000;display:flex;justify-content:center;transform:scaleX(0.88);transform-origin:0 0;"><span>13000</span></span>
<span class="t" style="left:566px;top:563px;width:0;font-size:10px;color:#000;display:flex;justify-content:center;transform:scaleX(0.88);transform-origin:0 0;"><span>14000</span></span>
<span class="t" style="left:606px;top:563px;width:0;font-size:10px;color:#000;display:flex;justify-content:center;transform:scaleX(0.88);transform-origin:0 0;"><span>15000</span></span>
<span class="t" style="left:646px;top:563px;width:0;font-size:10px;color:#000;display:flex;justify-content:center;transform:scaleX(0.88);transform-origin:0 0;"><span>16000</span></span>
<span class="t" style="left:685px;top:563px;width:0;font-size:10px;color:#000;display:flex;justify-content:center;transform:scaleX(0.88);transform-origin:0 0;"><span>17000</span></span>
<span class="t" style="left:725px;top:563px;width:0;font-size:10px;color:#000;display:flex;justify-content:center;transform:scaleX(0.88);transform-origin:0 0;"><span>18000</span></span>
<span class="t" style="left:765px;top:563px;width:0;font-size:10px;color:#000;display:flex;justify-content:center;transform:scaleX(0.88);transform-origin:0 0;"><span>19000</span></span>
<span class="t" style="left:804px;top:563px;width:0;font-size:10px;color:#000;display:flex;justify-content:center;transform:scaleX(0.88);transform-origin:0 0;"><span>20000</span></span>
<span class="t" style="left:844px;top:563px;width:0;font-size:10px;color:#000;display:flex;justify-content:center;transform:scaleX(0.88);transform-origin:0 0;"><span>21000</span></span>
<span class="t" style="left:893px;top:28px;font-size:10px;color:#000;transform:scaleX(0.88);transform-origin:0 0;">dB</span>
<span class="t" style="left:893px;top:50px;font-size:10px;color:#000;transform:scaleX(0.88);transform-origin:0 0;">6</span>
<span class="t" style="left:893px;top:76px;font-size:10px;color:#000;transform:scaleX(0.88);transform-origin:0 0;">0</span>
<span class="t" style="left:893px;top:103px;font-size:10px;color:#000;transform:scaleX(0.88);transform-origin:0 0;">-6</span>
<span class="t" style="left:893px;top:129px;font-size:10px;color:#000;transform:scaleX(0.88);transform-origin:0 0;">-12</span>
<span class="t" style="left:893px;top:155px;font-size:10px;color:#000;transform:scaleX(0.88);transform-origin:0 0;">-18</span>
<span class="t" style="left:893px;top:182px;font-size:10px;color:#000;transform:scaleX(0.88);transform-origin:0 0;">-24</span>
<span class="t" style="left:893px;top:208px;font-size:10px;color:#000;transform:scaleX(0.88);transform-origin:0 0;">-30</span>
<span class="t" style="left:893px;top:234px;font-size:10px;color:#000;transform:scaleX(0.88);transform-origin:0 0;">-36</span>
<span class="t" style="left:893px;top:261px;font-size:10px;color:#000;transform:scaleX(0.88);transform-origin:0 0;">-42</span>
<span class="t" style="left:893px;top:287px;font-size:10px;color:#000;transform:scaleX(0.88);transform-origin:0 0;">-48</span>
<span class="t" style="left:893px;top:313px;font-size:10px;color:#000;transform:scaleX(0.88);transform-origin:0 0;">-54</span>
<span class="t" style="left:893px;top:340px;font-size:10px;color:#000;transform:scaleX(0.88);transform-origin:0 0;">-60</span>
<span class="t" style="left:893px;top:366px;font-size:10px;color:#000;transform:scaleX(0.88);transform-origin:0 0;">-66</span>
<span class="t" style="left:893px;top:392px;font-size:10px;color:#000;transform:scaleX(0.88);transform-origin:0 0;">-72</span>
<span class="t" style="left:893px;top:419px;font-size:10px;color:#000;transform:scaleX(0.88);transform-origin:0 0;">-78</span>
<span class="t" style="left:893px;top:445px;font-size:10px;color:#000;transform:scaleX(0.88);transform-origin:0 0;">-84</span>
<span class="t" style="left:893px;top:472px;font-size:10px;color:#000;transform:scaleX(0.88);transform-origin:0 0;">-90</span>
<span class="t" style="left:893px;top:498px;font-size:10px;color:#000;transform:scaleX(0.88);transform-origin:0 0;">-96</span>
<span class="t" style="left:893px;top:524px;font-size:10px;color:#000;transform:scaleX(0.88);transform-origin:0 0;">-102</span>
<span class="t" style="right:854px;top:586px;font-size:11px;color:#000;">Cursor:</span>
<div style="left:69px;top:584px;width:643px;height:16px;background:#d4d0c8;box-shadow:inset 1px 1px #808080,inset -1px -1px #fff;"></div>
<span class="t" style="left:73px;top:586px;font-size:11px;color:#000;letter-spacing:-0.14px;">21840 Hz, L=-78.75 dB, R=-81.38 dB</span>
<span class="t" style="right:854px;top:606px;font-size:11px;color:#000;">Frequency:</span>
<div style="left:69px;top:605px;width:643px;height:16px;background:#d4d0c8;box-shadow:inset 1px 1px #808080,inset -1px -1px #fff;"></div>
<span class="t" style="left:73px;top:607px;font-size:11px;color:#000;letter-spacing:-0.16px;">L= 138.78 Hz (C#3 +2), R= 126.86 Hz (B2 +46)</span>
<span class="t" style="right:854px;top:629px;font-size:11px;color:#000;letter-spacing:-0.3px;"><u>F</u>FT Size:</span>
<div style="left:69px;top:626px;width:65px;height:21px;background:#fff;box-shadow:inset 1px 1px #808080,inset -1px -1px #fff,inset 2px 2px #404040,inset -2px -2px #d4d0c8;"></div>
<div style="left:116px;top:628px;width:16px;height:17px;background:#d4d0c8;box-shadow:inset -1px -1px #404040,inset 1px 1px #fff,inset -2px -2px #808080;"></div>
<svg style="position:absolute;left:121px;top:634px" width="7" height="4" shape-rendering="crispEdges"><path d="M0 0h7v1h-1v1h-1v1h-1v1h-1v-1h-1v-1h-1v-1h-1z" fill="#000"/></svg>
<span class="t" style="left:73px;top:630px;font-size:11px;color:#000;">2048</span>
<div style="left:138px;top:626px;width:114px;height:21px;background:#fff;box-shadow:inset 1px 1px #808080,inset -1px -1px #fff,inset 2px 2px #404040,inset -2px -2px #d4d0c8;"></div>
<div style="left:234px;top:628px;width:16px;height:17px;background:#d4d0c8;box-shadow:inset -1px -1px #404040,inset 1px 1px #fff,inset -2px -2px #808080;"></div>
<svg style="position:absolute;left:239px;top:634px" width="7" height="4" shape-rendering="crispEdges"><path d="M0 0h7v1h-1v1h-1v1h-1v1h-1v-1h-1v-1h-1v-1h-1z" fill="#000"/></svg>
<span class="t" style="left:142px;top:630px;font-size:11px;color:#000;">Triangular</span>
<div style="left:720px;top:584px;width:1px;height:63px;background:#808080;"></div>
<div style="left:721px;top:584px;width:1px;height:63px;background:#fff;"></div>
<div style="left:727px;top:585px;width:13px;height:13px;background:#fff;box-shadow:inset 1px 1px #808080,inset -1px -1px #fff,inset 2px 2px #404040,inset -2px -2px #d4d0c8;"></div>
<svg style="position:absolute;left:730px;top:588px" width="7" height="7" shape-rendering="crispEdges"><path d="M6 0h1v3h-1v1h-1v1h-1v1h-1v1h-1v-1h-1v-1h-1v-3h1v1h1v1h1v-1h1v-1h1v-1h1z" fill="#000"/></svg>
<span class="t" style="left:745px;top:586px;font-size:11px;color:#000;"><u>L</u>inear View</span>
<span class="t" style="left:745px;top:607px;font-size:11px;color:#000;"><u>R</u>ange</span>
<div style="left:783px;top:603px;width:35px;height:21px;background:#fff;box-shadow:inset 1px 1px #808080,inset -1px -1px #fff,inset 2px 2px #404040,inset -2px -2px #d4d0c8;"></div>
<span class="t" style="left:787px;top:607px;font-size:11px;color:#000;">120</span>
<span class="t" style="left:822px;top:607px;font-size:11px;color:#000;">dB</span>
<span class="t" style="left:727px;top:629px;font-size:11px;color:#000;">R<u>e</u>ference</span>
<div style="left:783px;top:626px;width:35px;height:21px;background:#fff;box-shadow:inset 1px 1px #808080,inset -1px -1px #fff,inset 2px 2px #404040,inset -2px -2px #d4d0c8;"></div>
<span class="t" style="left:787px;top:630px;font-size:11px;color:#000;">-40</span>
<span class="t" style="left:822px;top:630px;font-size:11px;color:#000;">dBFS</span>
<div style="left:858px;top:579px;width:53px;height:20px;background:#000;"></div>
<div style="left:859px;top:580px;width:51px;height:18px;background:#d4d0c8;box-shadow:inset -1px -1px #404040,inset 1px 1px #fff,inset -2px -2px #808080;"></div>
<div style="left:862px;top:583px;width:45px;height:12px;background:transparent;outline:1px dotted #000;outline-offset:-1px;"></div>
<span class="t" style="left:884px;top:584px;width:0;font-size:11px;color:#000;display:flex;justify-content:center;"><span>Scan</span></span>
<div style="left:858px;top:603px;width:53px;height:20px;background:#d4d0c8;box-shadow:inset -1px -1px #404040,inset 1px 1px #fff,inset -2px -2px #808080;"></div>
<span class="t" style="left:884px;top:607px;width:0;font-size:11px;color:#000;display:flex;justify-content:center;"><span>Close</span></span>
<div style="left:858px;top:627px;width:53px;height:20px;background:#d4d0c8;box-shadow:inset -1px -1px #404040,inset 1px 1px #fff,inset -2px -2px #808080;"></div>
<span class="t" style="left:884px;top:631px;width:0;font-size:11px;color:#000;display:flex;justify-content:center;"><span>Help</span></span>
</body></html>
